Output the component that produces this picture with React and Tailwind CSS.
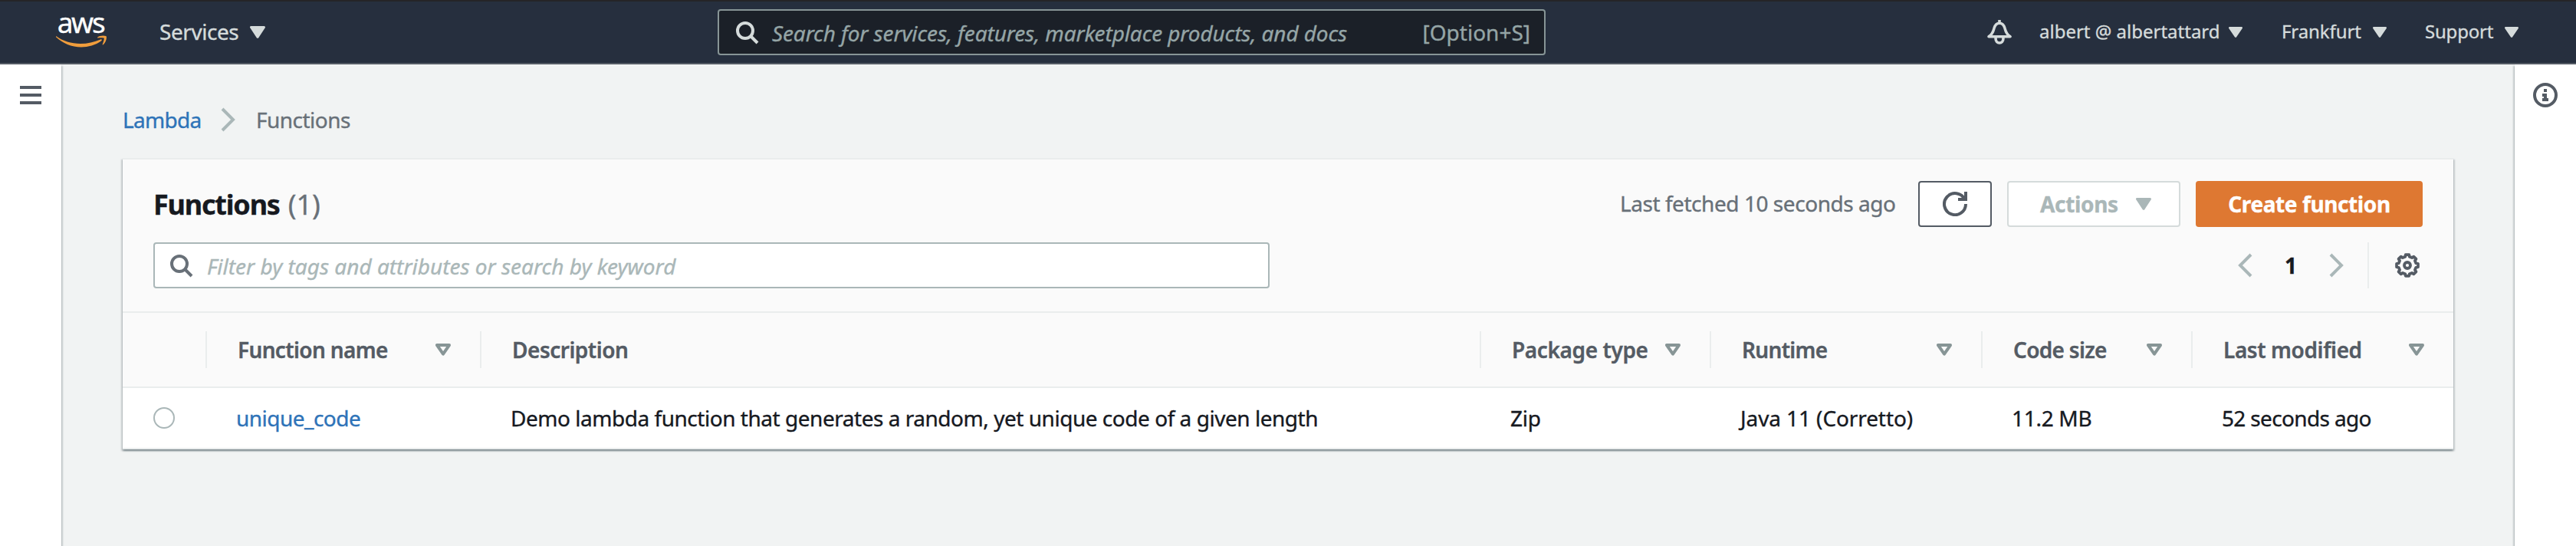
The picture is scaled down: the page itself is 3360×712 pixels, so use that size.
const gearOutline = Array.from({ length: 8 }, (_, i) => {
  const pts = [
    [-9, 14.1],
    [9, 14.1],
    [14, 11.6],
    [31, 11.6],
  ];
  return pts
    .map(([d, r]) => {
      const a = ((i * 45 + d) * Math.PI) / 180;
      return `${(16 + r * Math.cos(a)).toFixed(2)},${(16 + r * Math.sin(a)).toFixed(2)}`;
    })
    .join(" ");
}).join(" ");

function Caret({ className }) {
  return (
    <svg viewBox="0 0 20 16" preserveAspectRatio="none" className={`shrink-0 ${className}`}>
      <path d="M1.5 1.5h17L10 14.3z" fill="currentColor" stroke="currentColor" strokeWidth="3" strokeLinejoin="round" />
    </svg>
  );
}

function SortIcon() {
  return (
    <svg viewBox="0 0 20 16" className="h-4 w-5 shrink-0 text-[#879596]">
      <path d="M2 2h16l-8 11.7z" fill="none" stroke="currentColor" strokeWidth="4" strokeLinejoin="round" />
    </svg>
  );
}

function SearchIcon({ className }) {
  return (
    <svg viewBox="0 0 16 16" fill="none" stroke="currentColor" strokeWidth="2" className={`size-8 shrink-0 ${className}`}>
      <circle cx="7" cy="7" r="5" />
      <path d="m15 15-4.5-4.5" />
    </svg>
  );
}

function Chevron({ left, className = "" }) {
  return (
    <svg viewBox="0 0 16 16" fill="none" stroke="currentColor" strokeWidth="2" className={`size-8 shrink-0 text-[#aab7b8] ${className}`}>
      <path d={left ? "m11 1-7 7 7 7" : "m4 1 7 7-7 7"} />
    </svg>
  );
}

function Logo() {
  return (
    <div className="flex h-10 w-[66px] shrink-0 flex-col items-center">
      <span className="h-[25px] pr-0.5 text-[37px] leading-[14px] tracking-[-2.3px] text-white">aws</span>
      <svg viewBox="73 46.5 66 16" className="h-4 w-[66px] shrink-0" fill="#f09d3c">
        <path d="M73.5 47.8C82 54 93 57.5 105 57.5C114 57.5 123 55.5 131 52C132.5 51.3 133.5 52.8 132.2 53.8C124.5 59.5 115 62 106 62C93 62 82 57 73 48.8C72.5 48.2 72.9 47.4 73.5 47.8Z" />
        <path d="M127 49.2C129 47 135 46.3 138.2 47.4C140 48.3 138.5 55.5 134.6 58.7C134 59.2 133.4 58.9 133.7 58.2C134.6 56 136.3 51.2 135.6 50.3C134.9 49.4 130 49.6 127.7 49.9C127 50 126.8 49.6 127 49.2Z" />
      </svg>
    </div>
  );
}

function NavItem({ className, children }) {
  return (
    <div className="flex shrink-0 items-center">
      <span className={`shrink-0 whitespace-nowrap pb-0.5 text-[24px] leading-8 ${className}`}>{children}</span>
      <Caret className="h-3.5 w-[18px]" />
    </div>
  );
}

function TopBar() {
  return (
    <header className="flex h-[84px] shrink-0 items-center border-t-2 border-b-2 border-t-[#252527] border-b-[#545b64] bg-[#262f3e] pl-[73px] text-[#d5dbdb]">
      <Logo />
      <div className="ml-[69px] flex shrink-0 items-center">
        <span className="w-[118px] pb-0.5 tracking-[-0.45px]">Services</span>
        <Caret className="h-4 w-5" />
      </div>
      <div className="ml-[590px] flex h-[60px] w-[1080px] shrink-0 items-center rounded-[4px] border-2 border-[#879596] bg-[#1b2028] text-[#95a5a6]">
        <SearchIcon className="ml-5 text-[#d5dbdb]" />
        <span className="ml-[17px] grow pt-0.5 italic tracking-[-0.12px]">
          Search for services, features, marketplace products, and docs
        </span>
        <span className="pr-[18px]">[Option+S]</span>
      </div>
      <svg viewBox="0 0 32 32" fill="none" stroke="currentColor" strokeWidth="3.6" className="ml-[576px] size-8 shrink-0">
        <path d="M16 0v4" strokeLinecap="round" />
        <path d="M2 21.8C8 17.5 8 14 9 10.8C10.2 6.5 12.5 4.2 16 4.2S21.8 6.5 23 10.8C24 14 24 17.5 30 21.8Z" strokeLinejoin="round" />
        <path d="M11.1 23v1.8a4.9 5.2 0 0 0 9.8 0V23" />
      </svg>
      <div className="ml-9 flex">
        <NavItem className="w-[247px]">albert @ albertattard</NavItem>
        <div className="w-[51px]" />
        <NavItem className="w-[119px] tracking-[-0.1px]">Frankfurt</NavItem>
        <div className="w-[50px]" />
        <NavItem className="w-[104px] tracking-[-0.2px]">Support</NavItem>
      </div>
    </header>
  );
}

const panelShadow = "shadow-[0_2px_2px_0_rgba(0,28,36,0.3),2px_2px_2px_0_rgba(0,28,36,0.15),-2px_2px_2px_0_rgba(0,28,36,0.15)]";

const columns = [
  { name: "Function name", width: "w-[358px]", pad: "pr-10", track: "tracking-[-0.64px]" },
  { name: "Description", width: "w-[1304px]", track: "tracking-[-0.5px]", noSort: true },
  { name: "Package type", width: "w-[300px]", pad: "pr-10", track: "tracking-[-0.4px]" },
  { name: "Runtime", width: "w-[354px]", pad: "pr-10", track: "tracking-[-0.7px]" },
  { name: "Code size", width: "w-[274px]", pad: "pr-10", track: "tracking-[-0.7px]" },
  { name: "Last modified", width: "w-[340px]", pad: "pr-[38px]", track: "tracking-[-0.4px]", last: true },
];

const row = [
  { text: "unique_code", width: "w-[358px]", style: "text-[#2e73b8] tracking-[-0.52px]" },
  { text: "Demo lambda function that generates a random, yet unique code of a given length", width: "w-[1304px]", style: "tracking-[-0.47px]" },
  { text: "Zip", width: "w-[300px]", style: "tracking-[-0.3px]" },
  { text: "Java 11 (Corretto)", width: "w-[354px]", style: "tracking-[-0.1px]" },
  { text: "11.2 MB", width: "w-[274px]", style: "tracking-[-0.3px]" },
  { text: "52 seconds ago", width: "w-[340px]", style: "tracking-[-0.65px]" },
];

function FunctionsCard() {
  return (
    <section className={`h-[380px] w-[3040px] border-y-2 border-[#eaeded] bg-white ${panelShadow}`}>
      <div className="h-[200px] border-b-2 border-[#eaeded] bg-[#fafafa] px-10 pt-7">
        <div className="flex h-[60px] items-center">
          <h1 className="grow pt-0.5 text-[36px] leading-[58px]">
            <span className="font-bold tracking-[-1.2px] text-[#16191f]">Functions</span>
            <span className="ml-[11px] text-[#687078]">(1)</span>
          </h1>
          <span className="w-[389px] pb-0.5 tracking-[-0.45px] text-[#687078]">Last fetched 10 seconds ago</span>
          <button className="flex h-[60px] w-24 items-center justify-center rounded-[4px] border-2 border-[#545b64] bg-white text-[#545b64]">
            <svg viewBox="0 0 16 16" fill="none" stroke="currentColor" strokeWidth="2" className="size-8">
              <path d="M10 5h5V0" />
              <path d="M15 8a7 7 0 1 1-.7-3" />
            </svg>
          </button>
          <button className="ml-5 flex h-[60px] w-[226px] items-center justify-between rounded-[4px] border-2 border-[#d5dbdb] bg-white pr-9 pl-[41px] text-[#aab7b8]">
            <span className="font-bold tracking-[-0.34px]">Actions</span>
            <Caret className="h-4 w-5" />
          </button>
          <button className="ml-5 h-[60px] w-[296px] rounded-[4px] bg-[#de7832] font-bold tracking-[-0.4px] text-white">
            Create function
          </button>
        </div>
        <div className="mt-5 flex h-[60px] items-center">
          <div className="flex h-[60px] w-[1456px] items-center rounded-[4px] border-2 border-[#aab7b8] bg-white pl-[18px]">
            <SearchIcon className="text-[#687078]" />
            <span className="ml-[18px] pt-0.5 italic text-[#aab7b8]">Filter by tags and attributes or search by keyword</span>
          </div>
          <div className="ml-auto flex h-[60px] items-center">
            <Chevron left />
            <span className="ml-[34px] w-[52px] font-bold text-[#16191f]">1</span>
            <Chevron />
            <div className="ml-6 h-[60px] w-0.5 bg-[#eaeded]" />
            <svg viewBox="0 0 32 32" fill="none" stroke="#545b64" strokeWidth="3.8" strokeLinejoin="round" className="mr-1 ml-[34px] size-8">
              <polygon points={gearOutline} />
              <circle cx="16" cy="16" r="4" />
            </svg>
          </div>
        </div>
      </div>
      <div className="flex h-[98px] items-center border-b-2 border-[#eaeded] bg-[#fafafa]">
        <div className="h-12 w-[110px] shrink-0 border-r-2 border-[#eaeded]" />
        {columns.map((c) => (
          <div
            key={c.name}
            className={`flex h-12 shrink-0 items-center justify-between pl-10 font-semibold text-[#545b64] ${c.width} ${c.pad || ""} ${c.last ? "" : "border-r-2 border-[#eaeded]"} ${c.pad === "pr-10" ? "pr-[38px]" : ""}`}
          >
            <span className={c.track}>{c.name}</span>
            {!c.noSort && <SortIcon />}
          </div>
        ))}
      </div>
      <div className="flex h-[78px] items-center text-[#16191f]">
        <div className="w-[110px] shrink-0 pl-10">
          <div className="size-7 rounded-full border-2 border-[#aab7b8] bg-white" />
        </div>
        {row.map((c) => (
          <span key={c.text} className={`shrink-0 whitespace-nowrap pl-[38px] ${c.width} ${c.style}`}>
            {c.text}
          </span>
        ))}
      </div>
    </section>
  );
}

export default function App() {
  return (
    <div className="flex h-[712px] w-[3360px] flex-col overflow-hidden bg-[#f1f3f3] font-['Noto_Sans','Open_Sans',sans-serif] text-[28px] leading-10 [-webkit-text-stroke:0.35px]">
      <div className="relative z-10">
        <TopBar />
      </div>
      <div className="flex grow">
        <aside className={`w-20 shrink-0 bg-white ${panelShadow}`}>
          <div className="mt-7 ml-[26px] flex w-7 flex-col gap-1.5">
            <div className="h-1 bg-[#545b64]" />
            <div className="h-1 bg-[#545b64]" />
            <div className="h-1 bg-[#545b64]" />
          </div>
        </aside>
        <main className="grow pt-[52px] pl-20">
          <nav className="flex h-10 items-center">
            <span className="w-[122px] tracking-[-0.7px] text-[#2e73b8]">Lambda</span>
            <Chevron />
            <span className="ml-5 tracking-[-0.52px] text-[#687078]">Functions</span>
          </nav>
          <div className="mt-[30px]">
            <FunctionsCard />
          </div>
        </main>
        <aside className={`w-20 shrink-0 bg-white ${panelShadow}`}>
          <svg viewBox="0 0 32 32" className="mt-6 ml-6 size-8" fill="#545b64">
            <circle cx="16" cy="16" r="14" fill="none" stroke="#545b64" strokeWidth="4" />
            <path d="M14 8h4v4h-4zM12 14h6v6h2v4h-8v-4h2v-2h-2z" />
          </svg>
        </aside>
      </div>
    </div>
  );
}
